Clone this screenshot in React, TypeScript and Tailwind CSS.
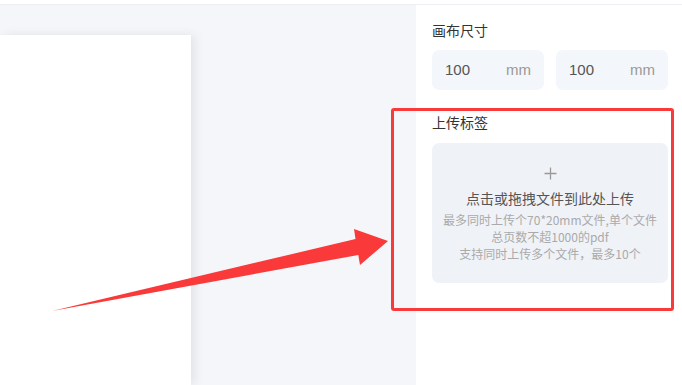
export default function App() {
    const font = { fontFamily: '"Noto Sans CJK SC", "Liberation Sans", sans-serif' };

    return (
        <div className="relative w-[682px] h-[385px] overflow-hidden bg-white flex flex-col" style={font}>
            <div className="h-[5px] shrink-0 bg-white border-b border-[#eceef2]" />
            <div className="flex flex-1 min-h-0">
                {/* canvas area */}
                <div className="flex-1 bg-[#f5f6f9] pt-[30px]">
                    <div className="w-[191px] h-full bg-white shadow-[4px_0_10px_rgba(0,0,0,0.08)]" />
                </div>

                {/* settings panel */}
                <div className="w-[266px] shrink-0 bg-white pl-4 pr-[14px] pt-[15px]">
                    <div className="text-[14px] leading-5 text-[#333]">画布尺寸</div>
                    <div className="flex gap-3 mt-[10px]">
                        {[0, 1].map((i) => (
                            <div
                                key={i}
                                className="flex-1 h-10 rounded-[7px] bg-[#f3f6fa] flex items-center justify-between pl-[13px] pr-[13px] text-[15px] font-['Liberation_Sans',sans-serif]"
                            >
                                <span className="text-[#555]">100</span>
                                <span className="text-[#999]">mm</span>
                            </div>
                        ))}
                    </div>

                    <div className="text-[14px] leading-5 text-[#333] mt-[22px]">上传标签</div>
                    <div className="mt-[11px] h-[140px] rounded-[7px] bg-[#eff2f7] flex flex-col items-center pt-[24px]">
                        <svg width="13" height="13" viewBox="0 0 13 13" fill="none">
                            <path d="M6.5 0.5v12M0.5 6.5h12" stroke="#999" strokeWidth="1.3" />
                        </svg>
                        <div className="mt-[8px] text-[14px] leading-5 text-[#555]">点击或拖拽文件到此处上传</div>
                        <div className="mt-[3px] text-[12px] leading-[17px] text-[#aaa] text-center">
                            <div>最多同时上传个70*20mm文件,单个文件</div>
                            <div>总页数不超1000的pdf</div>
                            <div>支持同时上传多个文件，最多10个</div>
                        </div>
                    </div>
                </div>
            </div>

            {/* annotation: red box */}
            <div className="absolute left-[391px] top-[108px] w-[283px] h-[203px] border-[3px] border-[#fa3a3a] rounded-[3px] pointer-events-none" />

            {/* annotation: arrow */}
            <svg className="absolute left-0 top-0 pointer-events-none" width="682" height="385" viewBox="0 0 682 385">
                <polygon
                    points="52,311 355.5,239 354,229 388,241 360,265 358.3,255"
                    fill="#fa3a3a"
                />
            </svg>
        </div>
    );
}
